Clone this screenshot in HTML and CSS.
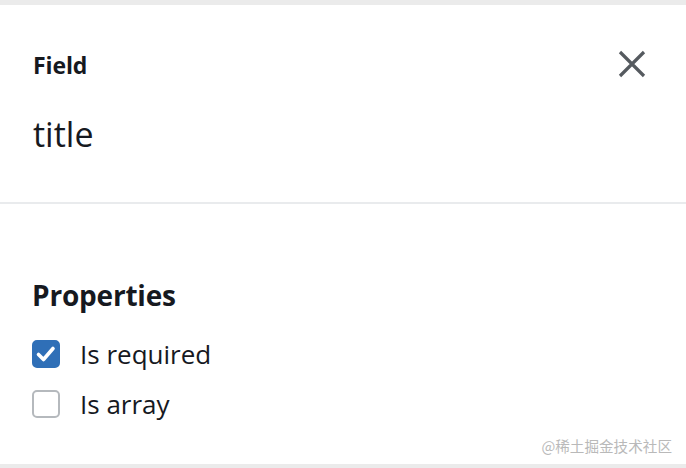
FILE: index.html
```html
<!DOCTYPE html>
<html>
<head>
<meta charset="utf-8">
<link rel="stylesheet" href="styles.css">
</head>
<body>
<div class="panel">
  <div class="topbar"></div>
  <header class="header">
    <div class="header-row">
      <div class="label">Field</div>
      <button class="close" aria-label="Close">
        <svg width="28" height="28" viewBox="0 0 28 28"><path d="M2 2 L26 26 M26 2 L2 26" stroke="#555a5f" stroke-width="3.2" stroke-linecap="butt" fill="none"/></svg>
      </button>
    </div>
    <div class="value">title</div>
  </header>
  <section class="props">
    <h2 class="props-title">Properties</h2>
    <label class="check-row">
      <span class="box checked">
        <svg width="22" height="22" viewBox="0 0 22 22"><path d="M3.5 11.5 L8.5 16.5 L18 5.5" stroke="#fff" stroke-width="3.6" fill="none" stroke-linecap="round" stroke-linejoin="round"/></svg>
      </span>
      <span class="check-text">Is required</span>
    </label>
    <label class="check-row">
      <span class="box"></span>
      <span class="check-text">Is array</span>
    </label>
    <div class="watermark">@稀土掘金技术社区</div>
  </section>
  <div class="bottombar"></div>
</div>
</body>
</html>
```

FILE: styles.css
```css
html, body {
  margin: 0;
  padding: 0;
  background: #ffffff;
}
body {
  font-family: "Open Sans", "Noto Sans", sans-serif;
  color: #16191f;
}
.panel {
  width: 686px;
  height: 468px;
  display: flex;
  flex-direction: column;
}
.topbar {
  height: 5px;
  background: #ebebeb;
}
.header {
  height: 199px;
  box-sizing: border-box;
  padding: 44px 40px 0 33px;
  border-bottom: 2px solid #e9ebed;
}
.header-row {
  display: flex;
  justify-content: space-between;
  align-items: flex-start;
  height: 40px;
}
.label {
  font-size: 23px;
  font-weight: 700;
  line-height: 32px;
  letter-spacing: -0.1px;
}
.close {
  border: 0;
  background: none;
  padding: 0;
  margin-top: 1px;
  width: 28px;
  height: 28px;
  cursor: pointer;
}
.close svg { display: block; }
.value {
  margin-top: 23px;
  font-size: 34px;
  line-height: 44px;
  font-weight: 400;
}
.props {
  flex: 1;
  padding: 73px 0 0 32px;
  position: relative;
}
.props-title {
  margin: 0 0 27px 0;
  font-size: 28px;
  line-height: 36px;
  font-weight: 700;
  letter-spacing: -0.2px;
}
.check-row {
  display: flex;
  align-items: center;
  height: 28px;
  margin-bottom: 22px;
}
.box {
  width: 28px;
  height: 28px;
  box-sizing: border-box;
  border: 2px solid #b5b9bd;
  border-radius: 5px;
  display: flex;
  align-items: center;
  justify-content: center;
  margin-right: 20px;
}
.box.checked {
  background: #2f6fb7;
  border-color: #2f6fb7;
}
.box svg { display: block; }
.check-text {
  font-size: 26px;
  line-height: 34px;
}
.watermark {
  position: absolute;
  right: 14px;
  bottom: 8px;
  font-family: "Noto Sans CJK SC", sans-serif;
  font-size: 14.6px;
  color: #b9b9b9;
}
.bottombar {
  height: 4px;
  background: #ebebeb;
}
```
